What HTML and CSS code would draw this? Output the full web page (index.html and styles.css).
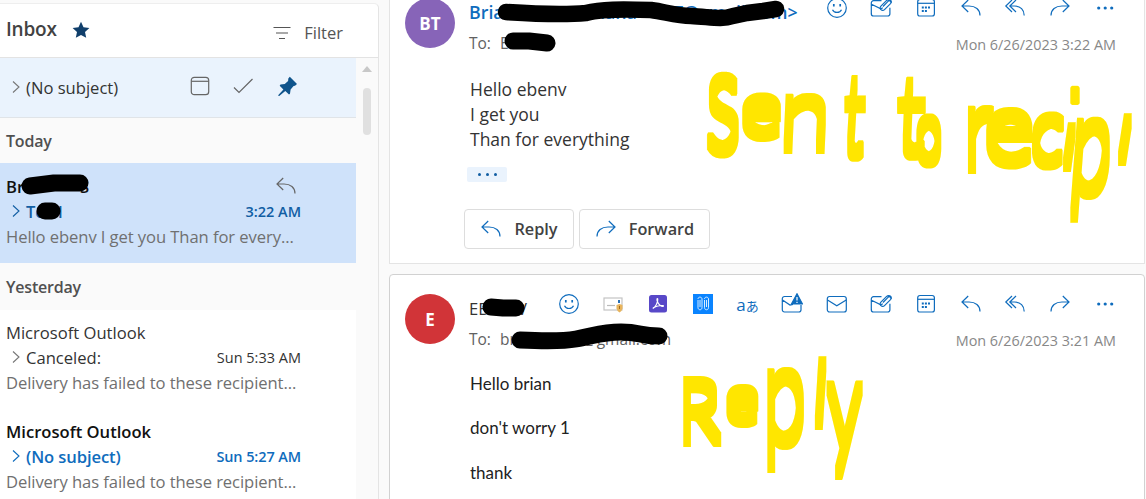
FILE: index.html
```html
<!DOCTYPE html>
<html lang="en">
<head>
<meta charset="utf-8">
<title>Inbox</title>
<link rel="stylesheet" href="styles.css">
</head>
<body>
<svg class="defs" width="0" height="0">
  <symbol id="smile" viewBox="0 0 22 22"><circle cx="11" cy="11" r="9.3"/><path d="M6.5 12.7c1.6 3.7 7.4 3.7 9 0"/><path d="M7.8 7v2.6M14.2 7v2.6" stroke-width="1.7"/></symbol>
  <symbol id="mail" viewBox="0 0 22 22"><rect x="1.3" y="3.5" width="19" height="15.5" rx="2.3"/><path d="M1.5 7l9.3 5.8L20.2 7"/></symbol>
  <symbol id="clipmail" viewBox="0 0 22 22"><path d="M11.5 3.7h-8a2.2 2.2 0 0 0-2.2 2.2v11A2.2 2.2 0 0 0 3.500 19h14.200a2.200 2.200 0 0 0 2.200-2.200v-6M1.500 7.200l9.300 4.600 2-1"/><path d="M13 9.500l5-5.200a1.700 1.700 0 0 1 2.500 2.300l-6 6a2.500 2.500 0 0 1-3.600-3.500l5.500-5.500c2.300-2.200 5.200-.5 5 2"/></symbol>
  <symbol id="alertmail" viewBox="0 0 22 22"><path d="M11 3.500H3.500a2.200 2.200 0 0 0-2.200 2.200v11.100A2.200 2.200 0 0 0 3.500 19h14.300a2.200 2.200 0 0 0 2.200-2.200V12M1.500 7l7.500 5 3-.6"/><path class="solid" d="M16 .8L21.500 11H10.500z"/><path d="M16 4v3.600M16 8.700v1.200" stroke="#fff"/></symbol>
  <symbol id="calendar" viewBox="0 0 22 22"><rect x="2.700" y="2.500" width="16.700" height="16.500" rx="2.300"/><path d="M2.700 6.300h16.700"/><path d="M9.900 10.500h2M13 10.500h2M6.800 14h2M9.900 14h2M6.800 10.500h2" stroke-width="2"/></symbol>
  <symbol id="reply" viewBox="0 0 22 22"><path d="M8.200 3L2 9l6.200 6M2 9h7c6.500 0 11 3.500 11 9.500"/></symbol>
  <symbol id="replyall" viewBox="0 0 22 22"><path d="M8 3L1.800 9 8 15M12 3L5.800 9l6.200 6M6 9h4.500c6 0 9.700 4 9.700 9.500"/></symbol>
  <symbol id="forward" viewBox="0 0 22 22"><path d="M13.800 3L20 9l-6.200 6M20 9h-7C6.500 9 2 12.500 2 18.500"/></symbol>
  <symbol id="more" viewBox="0 0 22 22"><g class="solid" stroke="none"><circle cx="4.700" cy="11" r="1.600"/><circle cx="11.200" cy="11" r="1.600"/><circle cx="17.700" cy="11" r="1.600"/></g></symbol>
  <symbol id="chevron" viewBox="0 0 10 14"><path d="M2 1.500L8 7l-6 5.500"/></symbol>
</svg>

<div class="app">
  <section class="list">
    <header class="list-head">
      <h1>Inbox</h1>
      <svg class="star" viewBox="0 0 18 18"><path d="M9 .8l2.500 5.400 5.900.7-4.400 4 1.200 5.900L9 13.900l-5.200 2.900L5 10.900l-4.400-4 5.900-.7z"/></svg>
      <button class="filter"><svg viewBox="0 0 18 14"><path d="M.5 1.500h17M3 7h12M6 12.500h6"/></svg>Filter</button>
    </header>
    <div class="list-body">
      <div class="threads">
        <div class="pinned">
          <svg class="chev"><use href="#chevron"/></svg><span class="subject">(No subject)</span>
          <svg class="tool cal" viewBox="0 0 20 20"><rect x="1.300" y="1.300" width="17.400" height="17.400" rx="3"/><path d="M1.300 5.300h17.400"/></svg>
          <svg class="tool check" viewBox="0 0 20 20"><path d="M1 11.500l5 5L19.500 3"/></svg>
          <svg class="tool pin" viewBox="0 0 20 20"><path d="M11.800.8L19 8l-2 1.800-1.400.3-3 3.300-.6 4.400-1 .6-3.700-3.500L1.200 20H.4v-1l5-5.500L1.700 9.700l.8-1.200 4.300-.6 3.300-3 .2-2.400z"/></svg>
        </div>
        <h2>Today</h2>
        <article class="thread selected">
          <div class="line"><span class="sender">Br</span><span class="tail">S</span><svg class="replied"><use href="#reply"/></svg></div>
          <div class="line"><svg class="chev"><use href="#chevron"/></svg><span class="subject">Te<i></i>l</span><time>3:22 AM</time></div>
          <p class="preview">Hello ebenv I get you Than for every...</p>
          <svg class="redact" viewBox="0 0 110 60"><path d="M30 23L54 20 80 20" stroke-width="17"/><path d="M45 48h7" stroke-width="17"/></svg>
        </article>
        <h2 class="second">Yesterday</h2>
        <article class="thread">
          <div class="line"><span class="sender">Microsoft Outlook</span></div>
          <div class="line"><svg class="chev"><use href="#chevron"/></svg><span class="subject">Canceled:</span><time>Sun 5:33 AM</time></div>
          <p class="preview">Delivery has failed to these recipient...</p>
        </article>
        <article class="thread unread">
          <div class="line"><span class="sender">Microsoft Outlook</span></div>
          <div class="line"><svg class="chev"><use href="#chevron"/></svg><span class="subject">(No subject)</span><time>Sun 5:27 AM</time></div>
          <p class="preview">Delivery has failed to these recipient...</p>
        </article>
      </div>
      <div class="scroll"><i class="up"></i><i class="thumb"></i></div>
    </div>
  </section>

  <main class="reading">
    <article class="message first">
      <header class="msg-head">
        <div class="avatar purple">BT</div>
        <div class="meta">
          <div class="row-top">
            <div class="from blue"><span>Bria</span><span class="mid">nana</span><span class="mail">T@gmail.com&gt;</span></div>
            <div class="actions">
              <svg><use href="#smile"/></svg><svg><use href="#clipmail"/></svg><svg><use href="#calendar"/></svg><svg><use href="#reply"/></svg><svg><use href="#replyall"/></svg><svg><use href="#forward"/></svg><svg><use href="#more"/></svg>
            </div>
          </div>
          <div class="row-to"><span>To:</span><span class="rcpt">E</span><time>Mon 6/26/2023 3:22 AM</time></div>
        </div>
      </header>
      <div class="body">
        <p>Hello ebenv</p><p>I get you</p><p>Than for everything</p>
        <button class="expand"><i></i><i></i><i></i></button>
        <div class="buttons">
          <button><svg><use href="#reply"/></svg>Reply</button>
          <button class="fwd"><svg><use href="#forward"/></svg>Forward</button>
        </div>
      </div>
      <svg class="redact" viewBox="0 0 440 90"><path d="M117 34C147 36 177 37 197 35 212 31 232 31 262 32 277 34 287 38 302 38 322 39 332 42 344 38L358 35 374 33 387 31" stroke-width="16.500"/><path d="M124 63h16l18 2" stroke-width="17"/></svg>
    </article>

    <article class="message next">
      <header class="msg-head">
        <div class="avatar red">E</div>
        <div class="meta">
          <div class="row-top">
            <div class="from"><span>EB</span><span class="vee">V</span></div>
            <div class="actions">
              <svg><use href="#smile"/></svg>
              <svg viewBox="0 0 22 22"><rect x="2" y="5" width="18" height="12" fill="#fff" stroke="#c4c4c4"/><path d="M5 12.500h8" stroke="#bbb"/><path d="M16 7h2v3h-2z" fill="#2b70b5" stroke="none"/><path d="M14.500 12l3-1 3 1v3.500q-.5 2.500-3 4-2.500-1.500-3-4z" fill="#e8b45c" stroke="none"/><path d="M17.500 13v3" stroke="#a06a1c" stroke-width="1"/></svg>
              <svg viewBox="0 0 22 22"><rect x="2" y="2" width="18" height="17.500" rx="2.500" fill="#5848c8" stroke="none"/><path d="M5.800 15.500c2-1 5.500-6 5-9.500-.6-1.500-1.400.2-.4 2.500 1 2.800 4 5.500 6 4.800 1.200-1.500-5.600-1-9.600 1.200z" stroke="#fff" stroke-width="1.100"/></svg>
              <svg viewBox="0 0 22 22"><path d="M1 1h20v20H1z" fill="#0a84ff" stroke="none"/><g stroke="#d9edff" stroke-width="1"><path d="M6 7v7.500c0 3 4 3 4 0V6c0-2.500-4-2.500-4 0M8 7v7M12.500 7v7.500c0 3 4 3 4 0V6c0-2.500-4-2.500-4 0M14.500 7v7"/></g></svg>
              <span class="translate">a<b>あ</b></span>
              <svg><use href="#alertmail"/></svg><svg><use href="#mail"/></svg><svg><use href="#clipmail"/></svg><svg><use href="#calendar"/></svg><svg><use href="#reply"/></svg><svg><use href="#replyall"/></svg><svg><use href="#forward"/></svg><svg><use href="#more"/></svg>
            </div>
          </div>
          <div class="row-to"><span>To:</span><span class="rcpt">br</span><span class="domain">@gmail.com</span><time>Mon 6/26/2023 3:21 AM</time></div>
        </div>
      </header>
      <div class="body"><p>Hello brian</p><p>don't worry 1</p><p>thank</p></div>
      <svg class="redact" viewBox="0 0 440 90"><path d="M102 33l12 1h13" stroke-width="17"/><path d="M131 66C151 67 176 67 187 65 205 62 212 58 232 58 252 58 250 62 270 62" stroke-width="17"/></svg>
    </article>
  </main>
</div>

<svg class="ink" viewBox="0 0 1146 499">
  <defs><filter id="chisel" filterUnits="userSpaceOnUse" x="0" y="0" width="1146" height="499" color-interpolation-filters="sRGB"><feMorphology operator="dilate" radius="2 7"/></filter></defs>
  <g filter="url(#chisel)">
    <text transform="matrix(.64 0 0 1 706 151)">S</text>
    <text transform="matrix(.82 0 0 .7 740 135)">e</text>
    <text transform="matrix(.94 0 -.04 .93 778 147)">n</text>
    <text transform="matrix(.6 0 -.06 1.070 842 154)">t</text>
    <text transform="matrix(.85 0 -.04 1.030 895 153)">t</text>
    <text transform="matrix(.46 0 0 .8 916 161)">o</text>
    <text transform="matrix(.85 0 0 1.080 963 167)">r</text>
    <text transform="matrix(1 0 0 .95 983 162)">e</text>
    <text transform="matrix(.72 0 -.05 .88 1029 163)">c</text>
    <text transform="matrix(.8 0 -.1 .72 1058 165)">ı</text>
    <text transform="matrix(.6 0 0 .6 1063 135)">˙</text>
    <text transform="matrix(.74 0 -.1 1.350 1068 192)">p</text>
    <text transform="matrix(.8 0 -.12 .78 1113 159)">ı</text>
    <text transform="matrix(.7 0 0 .8 678 440)">R</text>
    <text transform="matrix(.66 0 0 .6 725 421)">e</text>
    <text transform="matrix(.78 0 0 1.340 763 442)">p</text>
    <text transform="matrix(.8 0 -.05 .82 810 423)">l</text>
    <text transform="matrix(.7 0 0 1.270 827 451)">y</text>
  </g>
</svg>
</body>
</html>
```
FILE: styles.css
```css
* { box-sizing: border-box; }
body { margin: 0; width: 1146px; height: 499px; overflow: hidden; position: relative; background: #fafafa; font: 16.600px/25px "Open Sans", "Noto Sans", sans-serif; color: #333; }
h1, h2, p { margin: 0; font-weight: 400; }
button { font: inherit; color: inherit; background: none; border: 0; padding: 0; }
svg { flex: none; fill: none; stroke: currentColor; stroke-width: 1.2; }
.solid { fill: currentColor; }
.defs { position: absolute; }
.app { display: flex; height: 499px; }

.list { width: 379px; margin-top: 3px; border-right: 1px solid #e4e4e4; border-top: 1px solid #eee; border-radius: 0 5px 0 0; flex: none; }
.list-head { height: 54px; background: #fff; border-bottom: 1px solid #e3e3e3; border-radius: 0 5px 0 0; display: flex; align-items: center; padding: 0 35px 2px 6px; }
.list-head h1 { font-size: 19px; font-weight: 600; color: #424242; width: 66px; letter-spacing: -.2px; }
.star { width: 18px; height: 18px; fill: #103f6b; stroke: none; }
.filter { margin-left: auto; display: flex; align-items: center; gap: 13px; color: #555; font-size: 16.500px; padding-top: 6px; }
.filter svg { width: 18px; height: 14px; }
.list-body { display: flex; }
.threads { width: 356px; }
.pinned { height: 60px; background: #eaf3fd; border-bottom: 1px solid #e0e4e8; display: flex; align-items: center; padding-left: 11px; }
.chev { width: 10px; height: 14px; margin-right: 5px; margin-top: -2px; color: #777; stroke-width: 1.1; }
.pinned .subject { width: 164px; margin-top: -1px; }
.tool { width: 20px; height: 20px; color: #666; margin-right: 24px; margin-top: -4px; }
.check { margin-left: -1px; margin-right: 25px; }
.pin { fill: #0f548c; stroke: none; }
h2 { height: 45px; line-height: 46px; padding-left: 6px; font-size: 16px; font-weight: 600; letter-spacing: -.2px; color: #505050; }
h2.second { height: 47px; line-height: 48px; }
.thread { height: 99px; padding: 10px 55px 0 6px; background: #fff; position: relative; }
.thread.selected { height: 100px; padding-top: 11px; background: #cfe2fa; }
.line { height: 25px; display: flex; align-items: center; }
.line .chev { margin-left: 5px; }
.line time { margin-left: auto; font-size: 14.500px; margin-top: -1px; }
.line .subject { margin-top: -1px; }
.preview { color: #707070; white-space: nowrap; letter-spacing: -.08px; }
.unread .sender, .selected .sender, .tail { font-weight: 600; color: #111; }
.unread .subject, .unread time { color: #0f6cbd; font-weight: 600; letter-spacing: -.1px; }
.unread .chev { color: #0f6cbd; }
.selected .subject, .selected time, .selected .line .chev { color: #115ea3; font-weight: 600; }
.tail { margin-left: 56px; }
.subject i { display: inline-block; width: 13px; }
.replied { width: 22px; height: 22px; margin: -2px 4px 0 auto; color: #666; }
.selected .redact { position: absolute; left: 0; top: 0; width: 110px; height: 60px; }
.redact { stroke: #000; stroke-linecap: round; stroke-linejoin: round; }
.scroll { width: 22px; display: flex; flex-direction: column; align-items: center; padding-top: 8px; }
.up { border: 5px solid transparent; border-top: 0; border-bottom: 6px solid #c8c8c8; }
.thumb { width: 8px; height: 47px; margin-top: 16px; border-radius: 4px; background: #e0e0e0; }

.reading { margin-left: 10px; width: 757px; flex: none; }
.message { background: #fff; border: 1px solid #e4e4e4; position: relative; width: 756px; }
.message.first { margin-top: -22px; height: 286px; }
.message.next { margin-top: 10px; height: 240px; border-color: #d1d1d1; border-radius: 4px; }
.msg-head { display: flex; padding-left: 15px; }
.avatar { width: 50px; height: 50px; border-radius: 50%; margin-top: 19px; color: #fff; font-size: 17px; font-weight: 700; line-height: 51px; text-align: center; }
.purple { background: #8764b8; }
.red { background: #d13438; }
.meta { flex: 1; padding-left: 14px; }
.row-top { height: 58px; display: flex; align-items: center; justify-content: space-between; padding-right: 18px; }
.from { padding-top: 9px; white-space: nowrap; display: flex; }
.from.blue { color: #0f6cbd; font-weight: 600; font-size: 17.800px; width: 340px; }
.mid { margin-left: 90px; }
.mail { margin-left: 36px; }
.vee { margin-left: 28px; }
.actions { display: flex; color: #0f6cbd; align-items: center; margin-right: -1px; }
.actions svg { width: 22px; height: 22px; margin: 0 11.330px; }
.translate { width: 44.660px; text-align: center; font-size: 17px; }
.translate b { font: 400 13px "Noto Sans CJK JP", sans-serif; }
.row-to { margin-top: -6px; height: 25px; display: flex; color: #616161; font-size: 15.500px; padding-right: 28px; }
.rcpt { margin-left: 9px; }
.domain { margin-left: 67px; }
.row-to time { margin-left: auto; color: #888; font-size: 14.400px; padding-top: 1px; }
.body { padding: 21px 0 0 80px; color: #333; font-size: 17.500px; }
.expand { display: flex; width: 40px; height: 15px; margin: 15px 0 0 -3px; background: #eaf3fd; border-radius: 2px; align-items: center; justify-content: center; gap: 5px; }
.expand i { width: 3px; height: 3px; border-radius: 50%; background: #115ea3; }
.buttons { display: flex; gap: 5px; margin: 27px 0 0 -6px; }
.buttons button { width: 110px; height: 40px; border: 1px solid #ddd; border-radius: 4px; display: flex; align-items: center; justify-content: center; gap: 12px; font-weight: 600; color: #424242; font-size: 16.300px; }
.buttons .fwd { width: 131px; }
.buttons svg { width: 22px; height: 22px; color: #0f6cbd; }
.next .body { padding-top: 10px; font: 17px/44.400px Lato, sans-serif; color: #222; }
.message .redact { position: absolute; left: -1px; top: -1px; width: 440px; height: 90px; }

.ink { position: absolute; left: 0; top: 0; width: 1146px; height: 499px; pointer-events: none; }
.ink text { font: 300 100px Lato, sans-serif; fill: #ffe600; stroke: none; }
```
